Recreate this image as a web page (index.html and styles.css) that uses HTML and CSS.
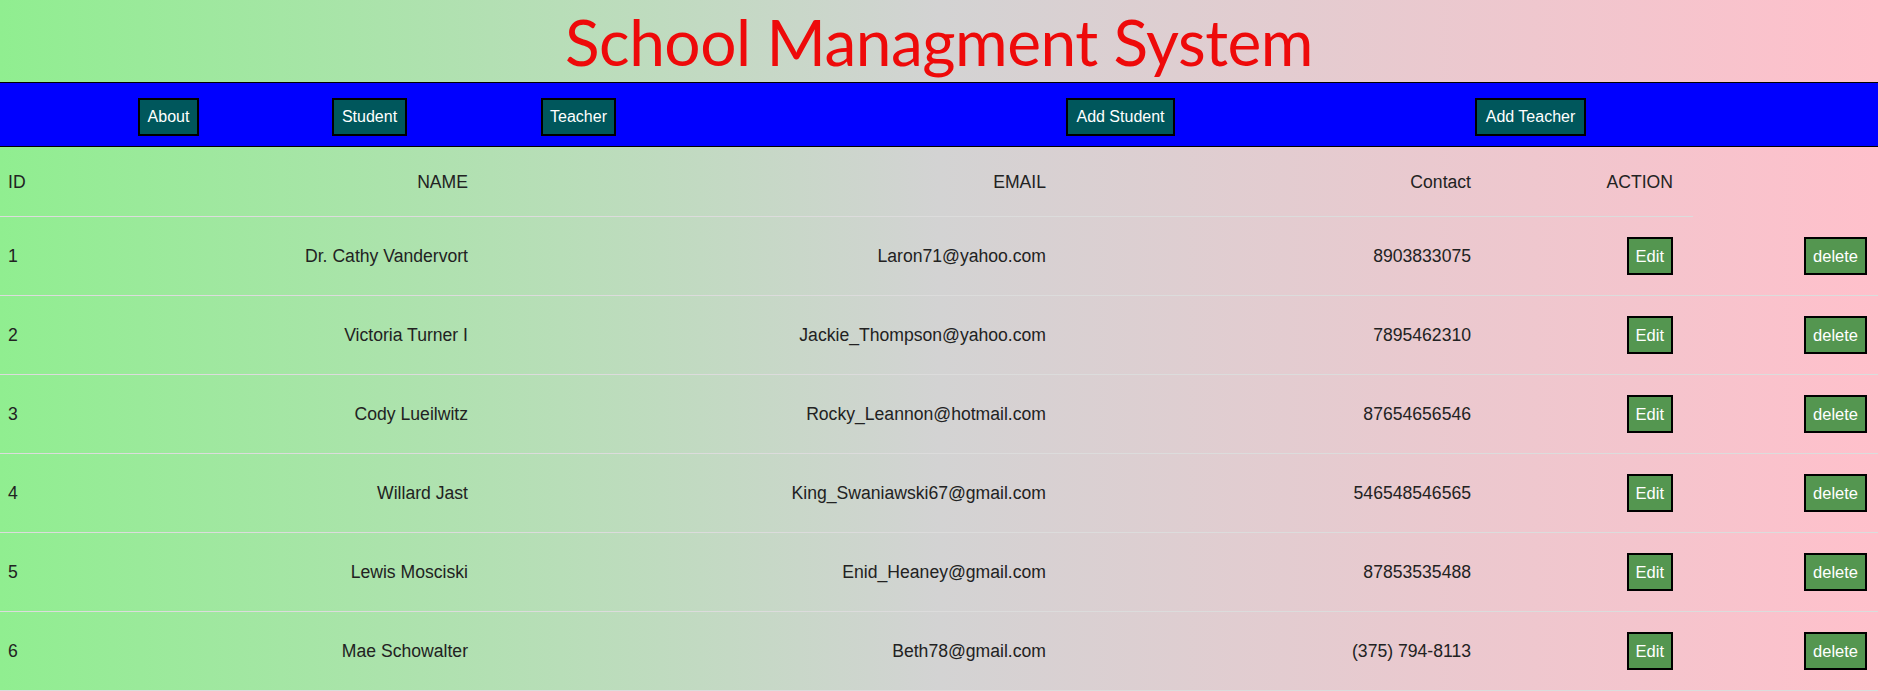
FILE: index.html
```html
<!DOCTYPE html>
<html lang="en">
<head>
<meta charset="utf-8">
<title>School Managment System</title>
<link rel="stylesheet" href="styles.css">
</head>
<body>
<h1 class="title">School Managment System</h1>
<nav class="nav">
  <button class="nav-btn about">About</button>
  <button class="nav-btn student">Student</button>
  <button class="nav-btn teacher">Teacher</button>
  <button class="nav-btn add-student">Add Student</button>
  <button class="nav-btn add-teacher">Add Teacher</button>
</nav>
<table class="grid">
  <colgroup>
    <col class="c1"><col class="c2"><col class="c3"><col class="c4"><col class="c5"><col class="c6">
  </colgroup>
  <thead>
    <tr><th class="id">ID</th><th>NAME</th><th>EMAIL</th><th>Contact</th><th class="act">ACTION</th></tr>
  </thead>
  <tbody>
    <tr><td class="id">1</td><td>Dr. Cathy Vandervort</td><td>Laron71@yahoo.com</td><td>8903833075</td><td class="act"><button class="row-btn">Edit</button></td><td class="del"><button class="row-btn">delete</button></td></tr>
    <tr><td class="id">2</td><td>Victoria Turner I</td><td>Jackie_Thompson@yahoo.com</td><td>7895462310</td><td class="act"><button class="row-btn">Edit</button></td><td class="del"><button class="row-btn">delete</button></td></tr>
    <tr><td class="id">3</td><td>Cody Lueilwitz</td><td>Rocky_Leannon@hotmail.com</td><td>87654656546</td><td class="act"><button class="row-btn">Edit</button></td><td class="del"><button class="row-btn">delete</button></td></tr>
    <tr><td class="id">4</td><td>Willard Jast</td><td>King_Swaniawski67@gmail.com</td><td>546548546565</td><td class="act"><button class="row-btn">Edit</button></td><td class="del"><button class="row-btn">delete</button></td></tr>
    <tr><td class="id">5</td><td>Lewis Mosciski</td><td>Enid_Heaney@gmail.com</td><td>87853535488</td><td class="act"><button class="row-btn">Edit</button></td><td class="del"><button class="row-btn">delete</button></td></tr>
    <tr><td class="id">6</td><td>Mae Schowalter</td><td>Beth78@gmail.com</td><td>(375) 794-8113</td><td class="act"><button class="row-btn">Edit</button></td><td class="del"><button class="row-btn">delete</button></td></tr>
  </tbody>
</table>
</body>
</html>
```
FILE: styles.css
```css
html, body {
  margin: 0;
  padding: 0;
}
body {
  min-height: 100vh;
  background: linear-gradient(to right, #90ee90, #d3d3d3, #ffc0cb);
  font-family: "Liberation Sans", Arial, sans-serif;
  color: #222;
  overflow: hidden;
}
.title {
  margin: 0;
  height: 82px;
  line-height: 84px;
  text-align: center;
  font-family: Lato, "Open Sans", sans-serif;
  font-weight: 400;
  font-size: 64px;
  letter-spacing: -0.5px;
  color: #ee0a0a;
}
.nav {
  display: flex;
  align-items: flex-start;
  height: 38px;
  padding: 15px 0 10px;
  background: #0000ff;
  border-top: 1px solid #000;
  border-bottom: 1px solid #000;
}
.nav-btn {
  box-sizing: border-box;
  height: 38px;
  padding: 0;
  border: 2px solid #000;
  background: #00575c;
  color: #fff;
  font-family: "Liberation Sans", Arial, sans-serif;
  font-size: 16px;
  line-height: 18px;
  text-align: center;
}
.about { width: 61px; margin-left: 138px; }
.student { width: 75px; margin-left: 133px; }
.teacher { width: 75px; margin-left: 134px; }
.add-student { width: 109px; margin-left: 450px; }
.add-teacher { width: 111px; margin-left: 300px; }

.grid {
  width: 100%;
  table-layout: fixed;
  border-collapse: collapse;
  font-size: 17.6px;
  line-height: 20px;
}
.c1 { width: 60px; }
.c2 { width: 416px; }
.c3 { width: 578px; }
.c4 { width: 425px; }
.c5 { width: 214px; }
.c6 { width: 185px; }
.grid th,
.grid td {
  text-align: right;
  font-weight: 400;
  padding: 20px 8px;
  border-bottom: 1px solid #dcdcdc;
  vertical-align: middle;
  white-space: nowrap;
}
.grid th {
  padding-top: 25px;
  padding-bottom: 24px;
}
.grid .id { text-align: left; }
.grid .act { padding-right: 20px; }
.grid .del { padding-right: 11px; }
.row-btn {
  box-sizing: border-box;
  height: 38px;
  padding: 0 7px;
  border: 2px solid #000;
  background: #549650;
  color: #fff;
  font-family: "Liberation Sans", Arial, sans-serif;
  font-size: 16.5px;
  line-height: 18px;
  vertical-align: middle;
}
```
